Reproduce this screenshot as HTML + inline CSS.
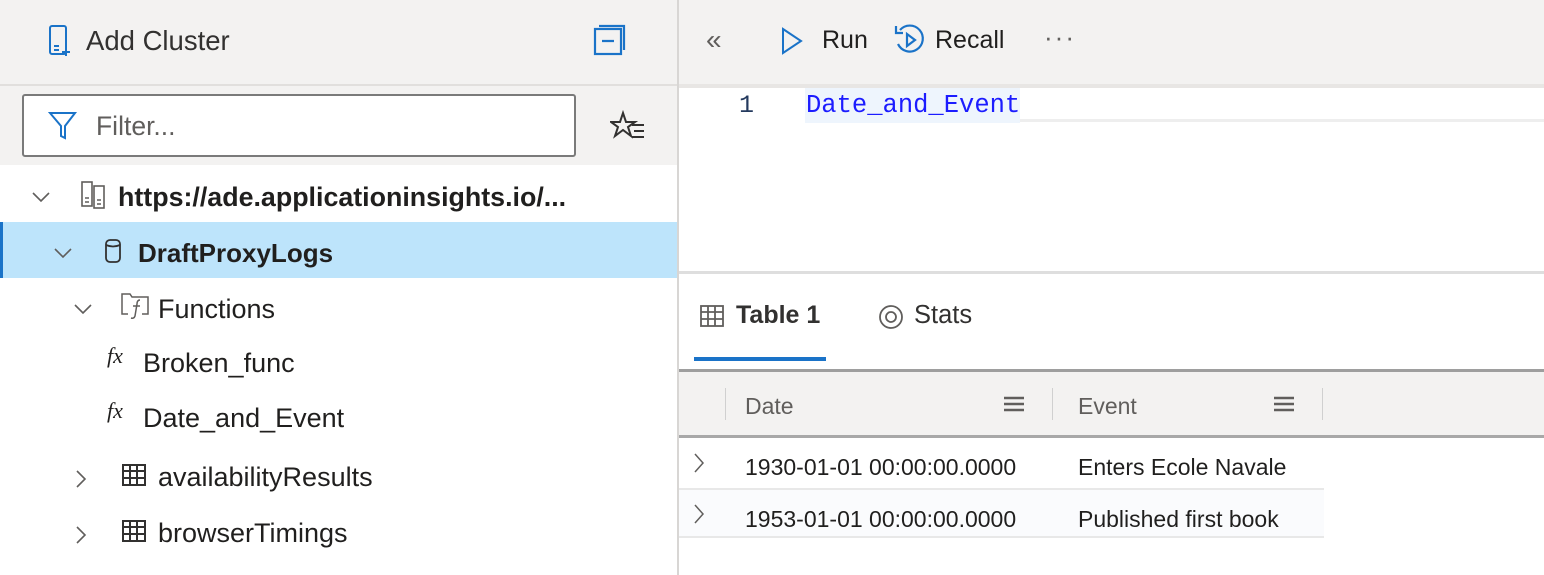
<!DOCTYPE html>
<html><head><meta charset="utf-8"><style>
*{margin:0;padding:0;box-sizing:border-box}
body{width:1544px;height:575px;overflow:hidden;background:#fff;font-family:"Liberation Sans",sans-serif;color:#201f1e;position:relative}
.a{position:absolute}
.t{position:absolute;white-space:nowrap}
</style></head><body>
<div class="a" style="left:0;top:0;width:677px;height:84px;background:#f3f2f1"></div>
<div class="a" style="left:0;top:84px;width:677px;height:2px;background:#e1dfdd"></div>
<div class="a" style="left:0;top:86px;width:677px;height:79px;background:#f3f2f1"></div>
<div class="a" style="left:677px;top:0;width:2px;height:575px;background:#d8d6d4"></div>
<svg class="a" style="left:48px;top:24px" width="26" height="34" viewBox="0 0 26 34" fill="none" stroke="#1a73c8" stroke-width="2"><rect x="2" y="2" width="16" height="28" rx="2"/><path d="M6 22h5M6 26h5M18 24v8M14 28h8"/></svg>
<div class="t" style="left:86px;top:25px;font-size:27.5px;color:#323130">Add Cluster</div>
<svg class="a" style="left:593px;top:24px" width="34" height="32" viewBox="0 0 34 32" fill="none" stroke="#1a73c8" stroke-width="2.2"><rect x="2" y="5" width="26" height="25"/><path d="M6 2h25v24M9 17h12"/></svg>
<div class="a" style="left:22px;top:94px;width:554px;height:63px;background:#fff;border:2px solid #7a7a7a;border-radius:3px"></div>
<svg class="a" style="left:48px;top:111px" width="30" height="30" viewBox="0 0 30 30" fill="none" stroke="#1a73c8" stroke-width="2"><path d="M2 2h25L17 15v12l-4-2V15z"/></svg>
<div class="t" style="left:96px;top:111px;font-size:26.5px;color:#605e5c">Filter...</div>
<svg class="a" style="left:610px;top:110px" width="36" height="32" viewBox="0 0 36 32" fill="none" stroke="#323130" stroke-width="2"><path d="M13 3l3 9h9l-7 5 3 9-8-6-8 6 3-9-7-5h9z"/><path d="M22 15h12M24 21h10M22 27h12"/></svg>
<svg class="a" style="left:30px;top:190px" width="22" height="14"><path d="M3 3l8 8 8-8" fill="none" stroke="#605e5c" stroke-width="1.6"/></svg>
<svg class="a" style="left:80px;top:180px" width="28" height="30" viewBox="0 0 28 30" fill="none" stroke="#605e5c" stroke-width="1.6"><rect x="2" y="2" width="10" height="24"/><rect x="14" y="6" width="10" height="22"/><path d="M5 18h4M5 22h4M17 20h4M17 24h4"/></svg>
<div class="t" style="left:118px;top:182px;font-size:26.8px;font-weight:bold">https://ade.applicationinsights.io/...</div>
<div class="a" style="left:0;top:222px;width:677px;height:56px;background:#bde4fb"></div>
<div class="a" style="left:0;top:222px;width:3px;height:56px;background:#1a73c8"></div>
<svg class="a" style="left:52px;top:246px" width="22" height="14"><path d="M3 3l8 8 8-8" fill="none" stroke="#605e5c" stroke-width="1.6"/></svg>
<svg class="a" style="left:104px;top:238px" width="18" height="26" viewBox="0 0 18 26" fill="none" stroke="#323130" stroke-width="1.8"><rect x="2" y="2" width="14" height="22" rx="4"/><path d="M2 7q7 3 14 0"/></svg>
<div class="t" style="left:138px;top:238px;font-size:26px;font-weight:bold">DraftProxyLogs</div>
<svg class="a" style="left:72px;top:302px" width="22" height="14"><path d="M3 3l8 8 8-8" fill="none" stroke="#605e5c" stroke-width="1.6"/></svg>
<svg class="a" style="left:120px;top:292px" width="32" height="28" viewBox="0 0 32 28" fill="none" stroke="#605e5c" stroke-width="1.5"><path d="M8 22H2V2h8l2 3h16v17h-6"/><path d="M20 8q-3 0-3 4l-2 12q-1 3-4 2M13 14h7"/></svg>
<div class="t" style="left:158px;top:294px;font-size:27px">Functions</div>
<div class="t" style="left:107px;top:343px;font-size:22px;font-style:italic;font-family:'Liberation Serif',serif">fx</div>
<div class="t" style="left:143px;top:348px;font-size:27px">Broken_func</div>
<div class="t" style="left:107px;top:398px;font-size:22px;font-style:italic;font-family:'Liberation Serif',serif">fx</div>
<div class="t" style="left:143px;top:403px;font-size:27px">Date_and_Event</div>
<svg class="a" style="left:74px;top:468px" width="14" height="22"><path d="M3 3l8 8-8 8" fill="none" stroke="#605e5c" stroke-width="1.6"/></svg>
<svg class="a" style="left:122px;top:464px" width="24" height="22" viewBox="0 0 24 22" fill="none" stroke="#323130" stroke-width="2"><rect x="1" y="1" width="22" height="20"/><path d="M1 7h22M1 14h22M8 1v20M15 1v20"/></svg>
<div class="t" style="left:158px;top:462px;font-size:27px">availabilityResults</div>
<svg class="a" style="left:74px;top:524px" width="14" height="22"><path d="M3 3l8 8-8 8" fill="none" stroke="#605e5c" stroke-width="1.6"/></svg>
<svg class="a" style="left:122px;top:520px" width="24" height="22" viewBox="0 0 24 22" fill="none" stroke="#323130" stroke-width="2"><rect x="1" y="1" width="22" height="20"/><path d="M1 7h22M1 14h22M8 1v20M15 1v20"/></svg>
<div class="t" style="left:158px;top:518px;font-size:27px">browserTimings</div>
<div class="a" style="left:679px;top:0;width:865px;height:84px;background:#f3f2f1"></div>
<div class="a" style="left:679px;top:84px;width:865px;height:4px;background:#e8e6e4"></div>
<div class="t" style="left:706px;top:24px;font-size:28px;color:#605e5c">«</div>
<svg class="a" style="left:780px;top:26px" width="24" height="30"><path d="M3 3l18 12-18 12z" fill="none" stroke="#1a73c8" stroke-width="2"/></svg>
<div class="t" style="left:822px;top:26px;font-size:25px">Run</div>
<svg class="a" style="left:892px;top:22px" width="36" height="36" viewBox="0 0 36 36" fill="none" stroke="#1a73c8" stroke-width="2.2"><path d="M8 8a13 13 0 1 1-2 14"/><path d="M4 4v7h7"/><path d="M15 12l8 6-8 6z"/></svg>
<div class="t" style="left:935px;top:26px;font-size:25px">Recall</div>
<div class="t" style="left:1044px;top:22px;font-size:26px;color:#605e5c;letter-spacing:2px">···</div>
<div class="a" style="left:805px;top:88px;width:739px;height:34px;border-bottom:3px solid #eeeeee"></div>
<div class="a" style="left:805px;top:88px;width:215px;height:35px;background:#eef5fd"></div>
<div class="t" style="left:739px;top:91px;font-size:25px;font-family:'Liberation Mono',monospace;color:#243a5e">1</div>
<div class="t" style="left:806px;top:91px;font-size:25.5px;font-family:'Liberation Mono',monospace;color:#1c1cff">Date_and_Event</div>
<div class="a" style="left:679px;top:271px;width:865px;height:3px;background:#dedede"></div>
<svg class="a" style="left:700px;top:305px" width="24" height="22" viewBox="0 0 24 22" fill="none" stroke="#605e5c" stroke-width="1.8"><rect x="1" y="1" width="22" height="20"/><path d="M1 7h22M1 14h22M8 1v20M15 1v20"/></svg>
<div class="t" style="left:736px;top:301px;font-size:25px;font-weight:bold;color:#323130">Table 1</div>
<svg class="a" style="left:878px;top:304px" width="26" height="26" fill="none" stroke="#605e5c" stroke-width="1.8"><circle cx="13" cy="13" r="11"/><circle cx="13" cy="13" r="5"/></svg>
<div class="t" style="left:914px;top:301px;font-size:25.5px;color:#323130">Stats</div>
<div class="a" style="left:694px;top:357px;width:132px;height:4px;background:#1a73c8"></div>
<div class="a" style="left:679px;top:369px;width:865px;height:3px;background:#9e9e9e"></div>
<div class="a" style="left:679px;top:372px;width:865px;height:63px;background:#f3f2f1"></div>
<div class="a" style="left:679px;top:435px;width:865px;height:3px;background:#a8a8a8"></div>
<div class="a" style="left:725px;top:388px;width:1px;height:32px;background:#d0d0d0"></div>
<div class="a" style="left:1052px;top:388px;width:1px;height:32px;background:#d0d0d0"></div>
<div class="a" style="left:1322px;top:388px;width:1px;height:32px;background:#d0d0d0"></div>
<div class="t" style="left:745px;top:393px;font-size:23px;color:#605e5c">Date</div>
<div class="t" style="left:1078px;top:393px;font-size:23px;color:#605e5c">Event</div>
<svg class="a" style="left:1004px;top:396px" width="20" height="16"><path d="M0 2h20M0 8h20M0 14h20" stroke="#605e5c" stroke-width="2.5"/></svg>
<svg class="a" style="left:1274px;top:396px" width="20" height="16"><path d="M0 2h20M0 8h20M0 14h20" stroke="#605e5c" stroke-width="2.5"/></svg>
<svg class="a" style="left:692px;top:452px" width="14" height="24"><path d="M3 2l8 9-8 9" fill="none" stroke="#605e5c" stroke-width="1.5"/></svg>
<div class="t" style="left:745px;top:454px;font-size:23px">1930-01-01 00:00:00.0000</div>
<div class="t" style="left:1078px;top:454px;font-size:23px">Enters Ecole Navale</div>
<div class="a" style="left:679px;top:488px;width:645px;height:2px;background:#e8e8e8"></div>
<div class="a" style="left:679px;top:490px;width:645px;height:47px;background:#fafbfd"></div>
<svg class="a" style="left:692px;top:503px" width="14" height="24"><path d="M3 2l8 9-8 9" fill="none" stroke="#605e5c" stroke-width="1.5"/></svg>
<div class="t" style="left:745px;top:506px;font-size:23px">1953-01-01 00:00:00.0000</div>
<div class="t" style="left:1078px;top:506px;font-size:23px">Published first book</div>
<div class="a" style="left:679px;top:536px;width:645px;height:2px;background:#e8e8e8"></div>
</body></html>
